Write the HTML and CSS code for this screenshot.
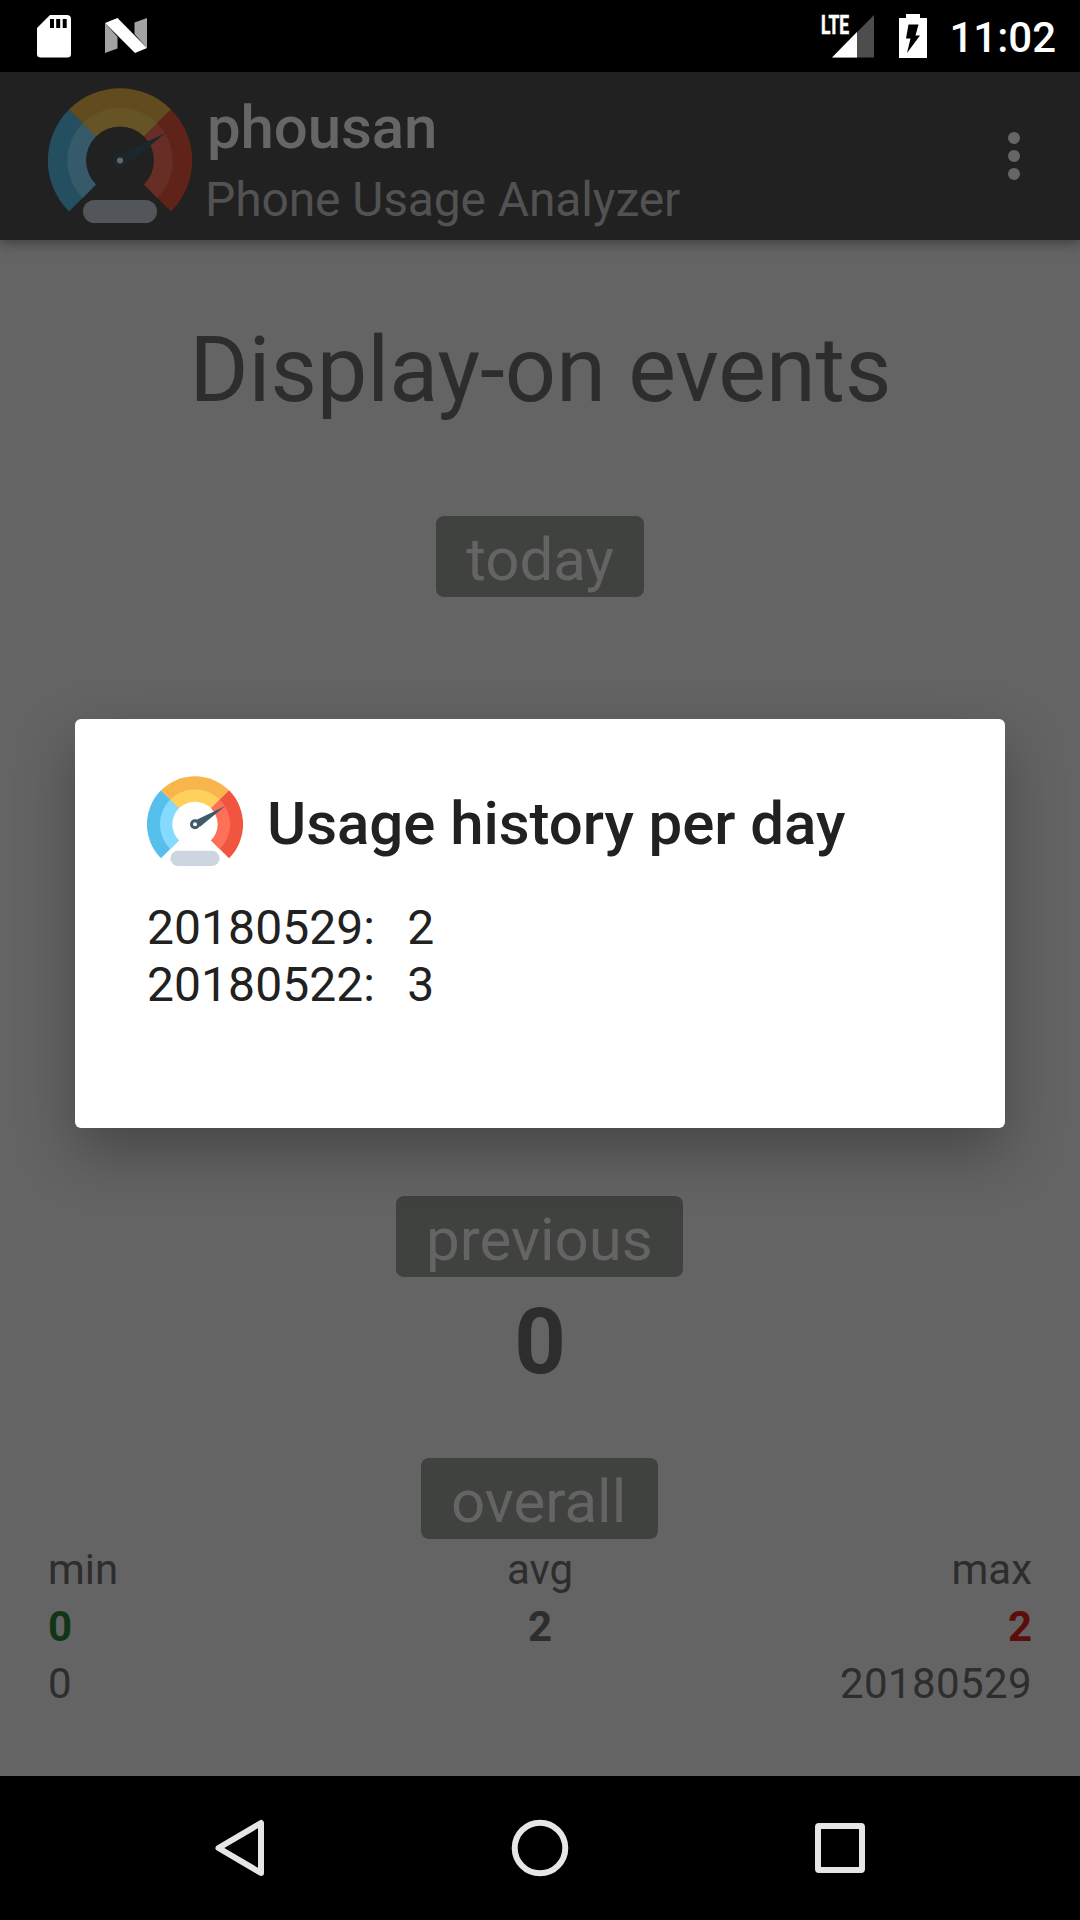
FILE: index.html
```html
<!DOCTYPE html>
<html lang="en">
<head>
<meta charset="utf-8">
<title>phousan</title>
<link rel="stylesheet" href="styles.css">
</head>
<body>
<svg class="defs" width="0" height="0">
  <symbol id="gauge" viewBox="-72 -72.5 144 135">
    <path class="g-blue" d="M-51 51A72 72 0 0 1-51-51L0 0Z"/>
    <path class="g-amber" d="M-51-51A72 72 0 0 1 51-51L0 0Z"/>
    <path class="g-red" d="M51-51A72 72 0 0 1 51 51L0 0Z"/>
    <path class="g-blue-in" d="M-37.2 37.2A52.6 52.6 0 0 1-37.2-37.2L0 0Z"/>
    <path class="g-amber-in" d="M-37.2-37.2A52.6 52.6 0 0 1 37.2-37.2L0 0Z"/>
    <path class="g-red-in" d="M37.2-37.2A52.6 52.6 0 0 1 37.2 37.2L0 0Z"/>
    <circle class="g-face" r="34"/>
    <path class="g-face" d="M-24 24H24L0 0Z"/>
    <path class="g-needle" d="M2.5-7L45.5-27.5L7 4Z"/>
    <circle class="g-needle" r="7.5"/>
    <circle class="g-pin" r="3"/>
    <rect class="g-base" x="-37" y="39.5" width="74" height="23" rx="11.5"/>
  </symbol>
</svg>

<div class="screen">
  <header class="status">
    <div class="status-side">
      <svg class="sd" viewBox="0 0 34 43"><path fill="#fff" d="M13 0H30.500Q34 .5 34 4V39Q34 42.500 30.500 42.500H3.500Q0 42.500 0 39V13Z"/><path d="M13 4h4v9h-4zM19.200 4h4v9h-4zM25.700 4h4v9h-4z"/></svg>
      <svg class="n" viewBox="0 0 42 35"><path fill="#a3a3a3" d="M0 5L12.500 19V30.500L0 35ZM42 0L29.500 4.500V16L42 30Z"/><path fill="#fff" d="M0 5L12.500 0L42 30L30 35Z"/></svg>
    </div>
    <div class="status-side">
      <svg class="signal" viewBox="0 0 54 43"><path fill="#4d4d4d" d="M53 0V42.500H11Z"/><path fill="#fff" d="M36 17V42.500H11Z"/><text class="lte" transform="translate(0 18.600) scale(.67 1)">LTE</text></svg>
      <svg class="battery" viewBox="0 0 28 44"><path fill="#fff" d="M7 0H21V4H28V44H0V4H7Z"/><path d="M9.500 10.500H19.500L16.500 21.500H21L8 39L11.500 24.500H7Z"/></svg>
      <span class="clock">11:02</span>
    </div>
  </header>

  <div class="appbar">
    <svg class="logo dim"><use href="#gauge"/></svg>
    <div class="titles">
      <div class="title">phousan</div>
      <div class="subtitle">Phone Usage Analyzer</div>
    </div>
    <div class="overflow"><i></i><i></i><i></i></div>
  </div>

  <main class="content">
    <h1 class="heading">Display-on events</h1>
    <div class="pill today">today</div>
    <div class="pill previous">previous</div>
    <div class="count">0</div>
    <div class="pill overall">overall</div>
    <div class="stats">
      <div class="stat"><span>min</span><b class="low">0</b><span>0</span></div>
      <div class="stat mid"><span>avg</span><b>2</b></div>
      <div class="stat end"><span>max</span><b class="high">2</b><span class="date">20180529</span></div>
    </div>
  </main>

  <nav class="nav">
    <svg viewBox="-40 -40 80 80"><path d="M21-25V25L-21.500 0Z"/></svg>
    <svg viewBox="-40 -40 80 80"><circle r="25.300"/></svg>
    <svg viewBox="-40 -40 80 80"><rect x="-22" y="-22" width="44" height="44" rx="1"/></svg>
  </nav>

  <section class="dialog">
    <div class="dialog-head">
      <svg class="logo"><use href="#gauge"/></svg>
      <h2 class="dialog-title">Usage history per day</h2>
    </div>
    <div class="history">20180529:   2
20180522:   3</div>
  </section>
</div>
</body>
</html>
```
FILE: styles.css
```css
* { box-sizing: border-box; }
body { margin: 0; background: #000; font-family: Roboto, sans-serif; }
h1, h2 { margin: 0; }
.defs { position: absolute; }
.screen {
  position: relative;
  width: 1080px;
  height: 1920px;
  display: flex;
  flex-direction: column;
  overflow: hidden;
}

/* Status bar */
.status {
  height: 72px;
  flex: none;
  display: flex;
  justify-content: space-between;
  padding: 14px 24px 0 37px;
  background: #000;
}
.status-side { display: flex; align-items: flex-start; }
.sd { width: 34px; height: 43px; margin-top: 1px; }
.n { width: 42px; height: 35px; margin: 4px 0 0 34px; }
.signal { width: 54px; height: 43px; margin-top: 1px; overflow: visible; }
.lte { font: 700 26px Roboto, sans-serif; fill: #fff; stroke: #fff; stroke-width: .6; }
.battery { width: 28px; height: 44px; margin-left: 24px; }
.clock {
  margin-left: 22px;
  color: #fff;
  font-size: 42px;
  font-weight: 500;
  line-height: 48px;
}

/* Toolbar */
.appbar {
  position: relative;
  height: 168px;
  flex: none;
  display: flex;
  align-items: flex-start;
  padding: 16px 60px 0 48px;
  background: #212121;
  box-shadow: 0 4px 12px rgba(0, 0, 0, .35);
}
.appbar .logo { width: 144px; height: 135px; }
.titles { flex: 1; padding: 5px 0 0 13px; }
.title {
  padding-left: 2px;
  color: #666;
  font-size: 60px;
  font-weight: 500;
  line-height: 70px;
  letter-spacing: -.1px;
}
.subtitle {
  margin-top: 9px;
  color: #525252;
  font-size: 48px;
  line-height: 56px;
  letter-spacing: -.13px;
}
.overflow { display: flex; flex-direction: column; gap: 6px; margin-top: 44px; }
.overflow i { width: 12px; height: 12px; border-radius: 50%; background: #666; }

/* Gauge artwork */
.logo {
  --blue: #56bfec; --amber: #f8b54c; --red: #f2553f;
  --blue-in: #84dbff; --amber-in: #ffd05c; --red-in: #ff7058;
  --face: #fff; --needle: #40596b; --pin: #fff; --base: #cdd5e1;
  display: block;
  flex: none;
}
.logo.dim {
  --blue: #244f60; --amber: #634b20; --red: #60231a;
  --blue-in: #365a69; --amber-in: #665426; --red-in: #662e24;
  --face: #212121; --needle: #1b262d; --pin: #666; --base: #52565b;
}
.g-blue { fill: var(--blue); }
.g-amber { fill: var(--amber); }
.g-red { fill: var(--red); }
.g-blue-in { fill: var(--blue-in); }
.g-amber-in { fill: var(--amber-in); }
.g-red-in { fill: var(--red-in); }
.g-face { fill: var(--face); }
.g-needle { fill: var(--needle); }
.g-pin { fill: var(--pin); }
.g-base { fill: var(--base); }

/* Dimmed page */
.content {
  flex: 1;
  display: flex;
  flex-direction: column;
  align-items: center;
  padding: 78px 48px 0;
  background: #646464;
  color: #2d2d2d;
}
.heading {
  padding-left: 1px;
  font-size: 90px;
  font-weight: 400;
  line-height: 106px;
  letter-spacing: -.03px;
}
.pill {
  height: 81px;
  padding: 9px 30px 0;
  border-radius: 8px;
  background: #40423f;
  color: #646464;
  font-size: 60px;
  line-height: 70px;
}
.today { margin-top: 92px; }
.previous { width: 287px; margin: 599px 1px 0 0; }
.count { margin-top: 13px; font-size: 90px; font-weight: 700; line-height: 106px; }
.overall { width: 237px; margin: 62px 1px 0 0; }
.stats {
  align-self: stretch;
  display: grid;
  grid-template-columns: 1fr 1fr 1fr;
  margin-top: 2px;
  font-size: 42px;
  line-height: 57px;
}
.stat { display: flex; flex-direction: column; }
.mid { align-items: center; }
.end { align-items: flex-end; }
.date { letter-spacing: .4px; }
.low { color: #103617; }
.high { color: #5c0d0a; }

/* Navigation bar */
.nav {
  height: 144px;
  flex: none;
  display: flex;
  align-items: center;
  justify-content: space-between;
  padding: 0 200px;
  background: #000;
}
.nav svg {
  width: 80px;
  height: 80px;
  fill: none;
  stroke: #e6e6e6;
  stroke-width: 6;
  stroke-linejoin: round;
}

/* Dialog over the dimmed page */
.dialog {
  position: absolute;
  left: 75px;
  top: 719px;
  width: 930px;
  height: 409px;
  padding: 57px 72px 0;
  border-radius: 6px;
  background: #fff;
  color: #212121;
  box-shadow: 0 24px 60px rgba(0, 0, 0, .3);
}
.dialog-head { display: flex; align-items: flex-start; gap: 24px; }
.dialog .logo { width: 96px; height: 90px; }
.dialog-title {
  margin-top: 13px;
  font-size: 60px;
  font-weight: 500;
  line-height: 70px;
  letter-spacing: -.06px;
}
.history {
  margin-top: 33px;
  font-size: 48px;
  line-height: 57px;
  letter-spacing: .06px;
  word-spacing: -1.2px;
  white-space: pre;
}
```
